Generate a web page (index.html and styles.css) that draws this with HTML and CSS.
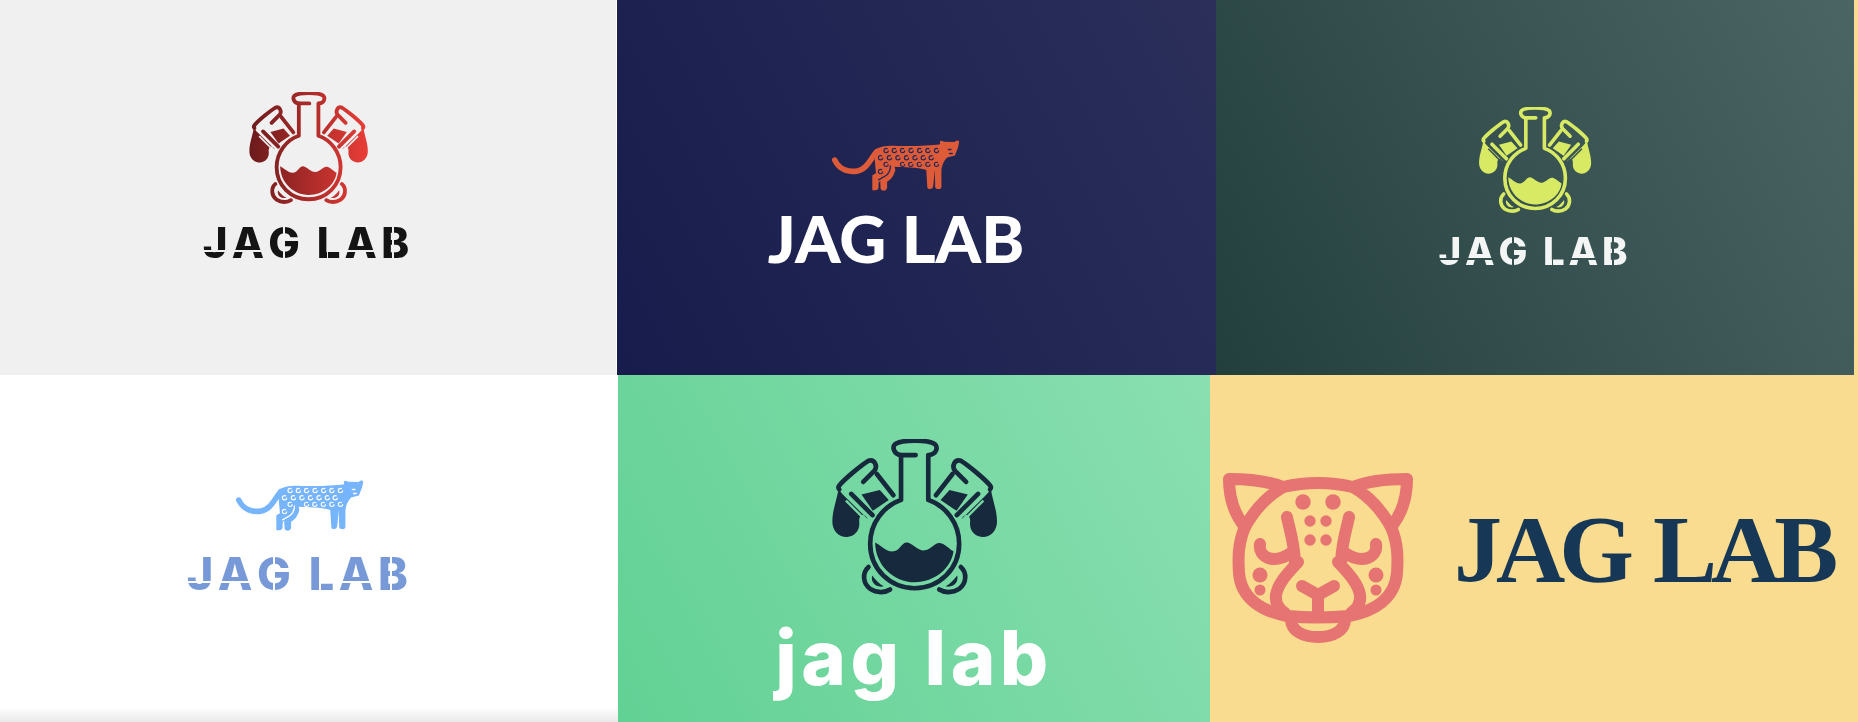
FILE: index.html
```html
<!DOCTYPE html>
<html lang="en">
<head>
<meta charset="utf-8">
<title>JAG LAB logos</title>
<link rel="stylesheet" href="styles.css">
</head>
<body>
<svg class="defs" aria-hidden="true">
  <defs>
    <linearGradient id="red-l" gradientUnits="userSpaceOnUse" x1="210" y1="0" x2="708" y2="0">
      <stop offset="0" stop-color="#6b1a1c"/><stop offset="1" stop-color="#ea3d37"/>
    </linearGradient>
    <linearGradient id="red-r" gradientUnits="userSpaceOnUse" x1="708" y1="0" x2="210" y2="0">
      <stop offset="0" stop-color="#6b1a1c"/><stop offset="1" stop-color="#ea3d37"/>
    </linearGradient>
    <g id="flask-side">
      <path class="ln" d="M320 412C300 430 303 462 325 478C345 491 370 490 385 480"/>
      <path class="fl" d="M331 438C340 450 352 464 366 470C345 476 325 460 331 438Z"/>
      <path class="ln" d="M304 156L338 122C348 108 338 86 320 92C300 104 250 145 233 165C229 170 229 175 232 178"/>
      <path class="ln" d="M268 192L332 256"/>
      <path class="ln" d="M345 132L395 196"/>
      <path class="fl" d="M299 194L354 180L381 210L333 243Z"/>
      <path class="fl" d="M230 174C225 210 211 240 211 275C211 305 233 323 255 322C280 320 295 300 292 276C290 256 306 246 318 268L247 198C240 192 234 184 230 174Z"/>
      <path class="gap" d="M252 212L310 270"/>
    </g>
    <symbol id="flask" viewBox="210 27 497 469">
      <path class="ln" d="M462 75L417 75C397 72 390 52 400 42C420 28 500 28 520 42C530 52 525 72 503 75"/>
      <path class="ln" d="M418 75V210C365 228 325 280 325 342C325 418 385 476 459 476C533 476 593 418 593 342C593 280 553 228 500 210V75"/>
      <path class="fl" d="M340 338C355 345 375 368 395 365C415 362 420 338 435 338C450 338 470 365 490 362C510 358 520 338 535 340C550 342 565 360 576 365C570 415 520 458 459 458C395 458 340 405 340 338Z"/>
      <use href="#flask-side" class="side-l"/>
      <use href="#flask-side" class="side-r" transform="matrix(-1 0 0 1 918 0)"/>
    </symbol>
    <symbol id="cat" viewBox="272 56 390 158">
      <path class="tail" d="M281 120C295 150 325 158 350 153C380 147 390 115 408 95"/>
      <path class="body" d="M400 92C415 78 440 76 470 77C520 78 570 77 601 72L600 64Q604 58 612 64L645 65Q655 57 659 64L656 80L646 106L622 112C610 125 606 140 605 152L605 200Q605 208 596 208Q586 208 586 200L585 150L580 200Q578 208 570 208Q562 208 562 200L559 150C530 140 490 143 463 140L465 150C460 170 450 180 440 186L440 205Q438 213 430 213Q421 213 420 205L419 182L414 190L414 205Q412 212 404 212L395 212L395 166L406 160Z"/>
      <path class="cut" d="M414 180L438 166C445 160 450 150 450 138"/>
      <path class="cut" d="M626 88H634M630 100H638"/>
      <g class="spots">
        <circle cx="437" cy="91" r="6.5"/><circle cx="462" cy="91" r="6.5"/><circle cx="487" cy="91" r="6.5"/><circle cx="513" cy="91" r="6.5"/><circle cx="539" cy="91" r="6.5"/><circle cx="564" cy="91" r="6.5"/><circle cx="590" cy="91" r="6.5"/>
        <circle cx="420" cy="113" r="6.5"/><circle cx="447" cy="113" r="6.5"/><circle cx="473" cy="113" r="6.5"/><circle cx="499" cy="113" r="6.5"/><circle cx="525" cy="113" r="6.5"/><circle cx="550" cy="113" r="6.5"/><circle cx="574" cy="113" r="6.5"/>
        <circle cx="437" cy="133" r="6.5"/><circle cx="487" cy="133" r="6.5"/><circle cx="512" cy="133" r="6.5"/><circle cx="538" cy="133" r="6.5"/><circle cx="564" cy="133" r="6.5"/><circle cx="590" cy="133" r="6.5"/>
        <circle cx="420" cy="155" r="6.5"/>
      </g>
    </symbol>
  </defs>
</svg>

<main class="board">
  <div class="row row-top">
    <section class="cell cell-grey">
      <svg class="flask flask-red"><use href="#flask"/></svg>
      <h2 class="stencil stencil-black"><span class="cut-h">J</span><span class="cut-h2">A</span><span class="cut-v">G</span><span class="cut-v2 word">L</span><span class="cut-h2">A</span><span class="cut-v2">B</span></h2>
    </section>
    <section class="cell cell-navy">
      <svg class="cat cat-orange"><use href="#cat"/></svg>
      <h2 class="sans-white">JAG LAB</h2>
    </section>
    <section class="cell cell-teal">
      <svg class="flask flask-lime"><use href="#flask"/></svg>
      <h2 class="stencil stencil-white"><span class="cut-h">J</span><span class="cut-h2">A</span><span class="cut-v">G</span><span class="cut-v2 word">L</span><span class="cut-h2">A</span><span class="cut-v2">B</span></h2>
    </section>
  </div>
  <div class="row row-bottom">
    <section class="cell cell-white">
      <svg class="cat cat-blue"><use href="#cat"/></svg>
      <h2 class="stencil stencil-blue"><span class="cut-h">J</span><span class="cut-h2">A</span><span class="cut-v">G</span><span class="cut-v2 word">L</span><span class="cut-h2">A</span><span class="cut-v2">B</span></h2>
    </section>
    <section class="cell cell-green">
      <svg class="flask flask-navy"><use href="#flask"/></svg>
      <h2 class="round-white">jag lab</h2>
    </section>
    <section class="cell cell-yellow">
      <svg class="cheetah" viewBox="0 0 190 170">
        <g class="ch-ln">
          <path d="M6 6C25 6 45 8 60 14C46 22 32 36 22 54C12 42 6 25 6 6Z"/>
          <path d="M184 6C165 6 145 8 130 14C144 22 158 36 168 54C178 42 184 25 184 6Z"/>
          <path d="M60 14C82 9 108 9 130 14"/>
          <path d="M22 54C15 70 15 85 16 100C18 125 38 138 64 143C85 145 105 145 126 143C152 138 172 125 174 100C175 85 175 70 168 54"/>
          <path d="M68 146C68 158 80 164 95 164C110 164 122 158 122 146"/>
          <path d="M64 44C66 55 71 67 72 90"/>
          <path d="M126 44C124 55 119 67 118 90"/>
          <path d="M37 71C35 84 50 92 68 80"/>
          <path d="M153 71C155 84 140 92 122 80"/>
          <path d="M75 89C65 100 55 110 53 122C52 130 56 136 62 140"/>
          <path d="M115 89C125 100 135 110 137 122C138 130 134 136 128 140"/>
          <path d="M79 113L95 122L111 113"/>
          <path d="M95 122V140"/>
        </g>
        <g class="ch-dot">
          <circle cx="80" cy="29" r="7.7"/><circle cx="110" cy="29" r="7.7"/>
          <circle cx="87" cy="48" r="5.7"/><circle cx="103" cy="48" r="5.7"/>
          <circle cx="87" cy="67" r="5.7"/><circle cx="103" cy="67" r="5.7"/>
          <circle cx="37" cy="102" r="7.5"/><circle cx="153" cy="102" r="7.5"/>
          <circle cx="37" cy="117" r="5.5"/><circle cx="153" cy="117" r="5.5"/>
        </g>
      </svg>
      <h2 class="serif-navy">JAG LAB</h2>
    </section>
  </div>
</main>
</body>
</html>
```

FILE: styles.css
```css
* { box-sizing: border-box; }
html, body { margin: 0; padding: 0; background: #fff; }
body { width: 1858px; height: 722px; overflow: hidden; }
h2 { margin: 0; }

.defs { display: block; width: 0; height: 0; }

.board { display: flex; flex-direction: column; width: 1858px; height: 722px; background: #f9dc8f; }
.row { display: flex; }
.row-top { height: 375px; }
.row-bottom { height: 347px; }

.cell { display: flex; flex-direction: column; align-items: center; flex: none; height: 100%; }

.cell-grey { width: 617px; height: 376px; border-right: 1px solid #fff; background: #f0f0f0; padding-top: 92px; }
.cell-navy { width: 599px; background: linear-gradient(62deg, #171c4c, #2b2f5a); padding: 139px 41px 0 0; }
.cell-teal { width: 638px; background: linear-gradient(62deg, #233f3d, #4b6564); padding-top: 107px; }
.cell-white { width: 618px; background: linear-gradient(#fff 0, #fff 332px, #e9e9e9 347px); padding: 104px 19px 0 0; }
.cell-green { width: 592px; background: linear-gradient(62deg, #62d194, #8adfb1); padding-top: 64px; }
.cell-yellow { width: 648px; flex-direction: row; align-items: flex-start; background: #f9dc8f; padding: 98px 0 0 13px; }

/* flask */
.flask { display: block; fill: none; }
.flask-red { width: 119px; height: 112px; --ink: url(#red-l); --ink-r: url(#red-r); --bg: #f0f0f0; --sw: 16; }
.flask-lime { width: 114px; height: 106px; --ink: #d8ea63; --ink-r: #d8ea63; --bg: #3a5453; --sw: 16; }
.flask-navy { width: 165px; height: 156px; --ink: #17293c; --ink-r: #17293c; --bg: #76d7a2; --sw: 14; }

.ln { fill: none; stroke: var(--ink); stroke-width: var(--sw); stroke-linecap: round; stroke-linejoin: round; }
.fl { fill: var(--ink); stroke: none; }
.gap { fill: none; stroke: var(--bg); stroke-width: 7; stroke-linecap: butt; }
.side-r { --ink: var(--ink-r); }

/* cat */
.cat { display: block; width: 130px; height: 52px; }
.tail { fill: none; stroke: var(--cat); stroke-width: 17; stroke-linecap: round; }
.body { fill: var(--cat); }
.cut { fill: none; stroke: var(--cut); stroke-width: 4; stroke-linecap: round; }
.spots circle { fill: var(--cat); stroke: var(--cut); stroke-width: 3.5; stroke-dasharray: 32 9; }
.cat-orange { --cat: #dd5b38; --cut: #22285a; }
.cat-blue { --cat: #76b4fb; --cut: #fff; }

/* stencil wordmarks */
.stencil { display: flex; font-family: "Inter", sans-serif; font-weight: 800; white-space: nowrap; line-height: 1; letter-spacing: .1em; }
.stencil span { display: block; color: transparent; -webkit-background-clip: text; background-clip: text; }
.stencil .word { margin-left: .3em; }
.stencil-black { --w: #141414; font-size: 42px; margin-top: 18px; }
.stencil-white { --w: #f4f6f5; font-size: 38.5px; margin-top: 19px; }
.stencil-blue { --w: #7899d8; font-size: 45px; margin-top: 20px; }

.cut-h { background-image: linear-gradient(var(--w) 66%, transparent 66%, transparent 71%, var(--w) 71%); }
.cut-h2 { background-image: linear-gradient(var(--w) 66%, transparent 66%, transparent 71%, var(--w) 71%); }
.cut-v { background-image: linear-gradient(90deg, var(--w) 42%, transparent 42%, transparent 48%, var(--w) 48%); }
.cut-v2 { background-image: linear-gradient(90deg, var(--w) 34%, transparent 34%, transparent 40%, var(--w) 40%); }

.sans-white { font-family: "Lato", sans-serif; font-weight: 900; font-size: 65px; line-height: 1; color: #fff; margin-top: 15px; white-space: nowrap; }
.round-white { font-family: "Inter", sans-serif; font-weight: 800; font-size: 76px; line-height: 1; color: #fff; margin-top: 24px; letter-spacing: 4.5px; white-space: nowrap; }

/* cheetah + serif */
.cheetah { display: block; flex: none; width: 190px; height: 170px; }
.ch-ln { fill: none; stroke: #e67472; stroke-width: 12; stroke-linecap: round; stroke-linejoin: round; }
.ch-dot { fill: #e67472; }
.serif-navy { font-family: "Liberation Serif", serif; font-weight: 700; font-size: 96px; line-height: 1; color: #163856; margin: 29px 0 0 41px; letter-spacing: -6px; word-spacing: 7px; white-space: nowrap; }
```
